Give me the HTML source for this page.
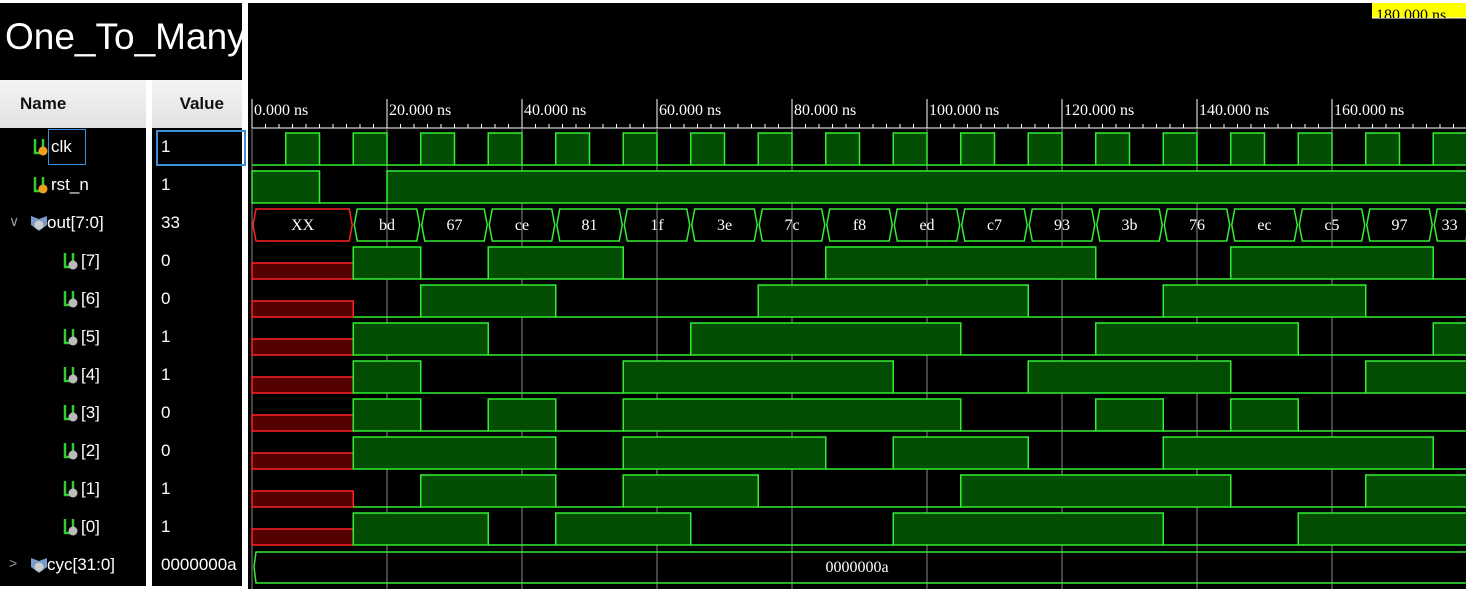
<!DOCTYPE html>
<html><head><meta charset="utf-8"><style>
body{margin:0;width:1466px;height:589px;background:#fff;overflow:hidden;position:relative;font-family:"Liberation Sans",Arial,sans-serif}
.p{position:absolute;background:#000}
.t{position:absolute;color:#fff;font-size:17px;white-space:nowrap}
.hd{position:absolute;top:80px;height:48px;background:linear-gradient(#f4f4f4,#e2e2e2);font-weight:bold;font-size:17px;color:#111;line-height:48px}
</style></head><body>
<div class="p" style="left:0;top:3px;width:242px;height:584px"></div>
<div class="p" style="left:248px;top:3px;width:1218px;height:586px"></div>
<div style="position:absolute;left:146px;top:80px;width:6px;height:509px;background:#fff"></div>
<div class="t" style="left:5px;top:16px;font-size:37px">One_To_Many</div>
<div class="hd" style="left:0;width:146px;padding-left:20px;box-sizing:border-box">Name</div>
<div class="hd" style="left:152px;width:90px;text-align:right;padding-right:18px;box-sizing:border-box">Value</div>
<div style="position:absolute;left:48px;top:129px;width:38px;height:36px;border:1px solid #3a8fd6;box-sizing:border-box"></div>
<div style="position:absolute;left:156px;top:130px;width:90px;height:36px;border:2px solid #3a8fd6;box-sizing:border-box"></div>
<div id="names"></div>
<div style="position:absolute;left:0;top:586px;width:242px;height:3px;background:#fff"></div>
<svg id="w" style="position:absolute;left:0;top:0" width="1466" height="589"></svg>
<script>
var N=document.getElementById('names'),h='';
var rows=[['clk','1',34,'s'],['rst_n','1',34,'s'],['out[7:0]','33',30,'b','v'],['[7]','0',64,'i'],['[6]','0',64,'i'],['[5]','1',64,'i'],['[4]','1',64,'i'],['[3]','0',64,'i'],['[2]','0',64,'i'],['[1]','1',64,'i'],['[0]','1',64,'i'],['cyc[31:0]','0000000a',30,'b','>']];
rows.forEach(function(r,i){var y=147+38*i;
var ic='';
if(r[3]=='s'||r[3]=='i'){var c=r[3]=='s'?'#f0a020':'#bbb';ic='<svg style="position:absolute;left:'+(r[2]-2)+'px;top:'+(y-10)+'px" width="16" height="20"><path d="M3 2v14h5M11 2v9" stroke="#3c3" stroke-width="2.5" fill="none"/><circle cx="11" cy="14" r="4.5" fill="'+c+'"/></svg>';}
else{ic='<svg style="position:absolute;left:'+(r[2])+'px;top:'+(y-9)+'px" width="18" height="18"><path d="M1 2l8 3 8-3v9l-8 6-8-6z" fill="#7a9ac8"/><circle cx="9" cy="11" r="4.5" fill="#ccc"/></svg>';
 h+='<div class="t" style="left:9px;top:'+(y-10)+'px;color:#999;font-size:14px">'+(r[4]=='v'?'&#8744;':'&gt;')+'</div>';}
h+=ic+'<div class="t" style="left:'+(r[2]+17)+'px;top:'+(y-10)+'px">'+r[0]+'</div><div class="t" style="left:161px;top:'+(y-10)+'px">'+r[1]+'</div>';});
N.innerHTML=h;
var s='',G='#33ee33',F='#024d02';
function X(t){return 252+6.75*t}
s+='<line x1="252" y1="128" x2="1466" y2="128" stroke="#fff"/>';
for(var t=0;t<180;t+=2){var x=X(t);s+='<line x1="'+x+'" y1="'+(t%20==0?99:124)+'" x2="'+x+'" y2="128" stroke="#fff"/>';}
for(t=0;t<180;t+=20){var x=X(t);s+='<line x1="'+x+'" y1="128" x2="'+x+'" y2="589" stroke="#888"/><text x="'+(x+2)+'" y="115" font-family="Liberation Serif" font-size="16" fill="#fff">'+t+'.000 ns</text>';}
function dig(tp,segs){var m=[];segs.forEach(function(g){var l=m[m.length-1];if(l&&l[2]==g[2]&&l[1]==g[0])l[1]=g[1];else m.push(g.slice());});
var lo=tp+32;m.forEach(function(g){var a=X(g[0]),b=Math.min(X(g[1]),1467);if(g[2]==1)s+='<rect x="'+a+'" y="'+tp+'" width="'+(b-a)+'" height="32" fill="'+F+'" stroke="'+G+'" stroke-width="1.5"/>';else if(g[2]==0)s+='<line x1="'+a+'" y1="'+lo+'" x2="'+b+'" y2="'+lo+'" stroke="'+G+'" stroke-width="1.5"/>';else s+='<rect x="'+a+'" y="'+(tp+16)+'" width="'+(b-a)+'" height="16" fill="#500" stroke="#f22" stroke-width="1.5"/>';});}
var c=[];for(t=0;t<180;t+=10){c.push([t,t+5,0]);c.push([t+5,t+10,1]);}dig(133,c);
dig(171,[[0,10,1],[10,20,0],[20,181,1]]);
var V=['bd','67','ce','81','1f','3e','7c','f8','ed','c7','93','3b','76','ec','c5','97','33'];
function bus(tp,a,b,txt,col){var x1=X(a)+1,x2=Math.min(X(b),1470)-1,m=tp+16;s+='<path d="M'+x1+' '+m+'L'+(x1+3)+' '+tp+'H'+(x2-3)+'L'+x2+' '+m+'L'+(x2-3)+' '+(tp+32)+'H'+(x1+3)+'Z" fill="none" stroke="'+col+'" stroke-width="1.5"/>';var cx=(X(a)+Math.min(X(b),1466))/2;s+='<text x="'+cx+'" y="'+(m+5)+'" text-anchor="middle" font-family="Liberation Serif" font-size="16" fill="#fff">'+txt+'</text>';}
bus(209,0,15,'XX','#f22');
V.forEach(function(v,i){var a=15+10*i;if(i==16){bus(209,a,a+6.6,v,G);}else bus(209,a,a+10,v,G);});
for(var b=7;b>=0;b--){var tp=247+38*(7-b),sg=[[0,15,2]];V.forEach(function(v,i){sg.push([15+10*i,25+10*i,(parseInt(v,16)>>b)&1]);});dig(tp,sg);}
s+='<path d="M254 567L256 552H1470M1470 583H256L254 567" fill="none" stroke="'+G+'" stroke-width="1.5"/><text x="857" y="572" text-anchor="middle" font-family="Liberation Serif" font-size="16" fill="#fff">0000000a</text>';
s+='<rect x="1372" y="3" width="94" height="15" fill="#ff0"/><line x1="1372" y1="18" x2="1466" y2="18" stroke="#fff"/>';
s+='<svg x="1372" y="3" width="94" height="15"><text x="4" y="17" font-family="Liberation Serif" font-size="16" fill="#000">180.000 ns</text></svg>';
document.getElementById('w').innerHTML=s;
</script>
</body></html>
